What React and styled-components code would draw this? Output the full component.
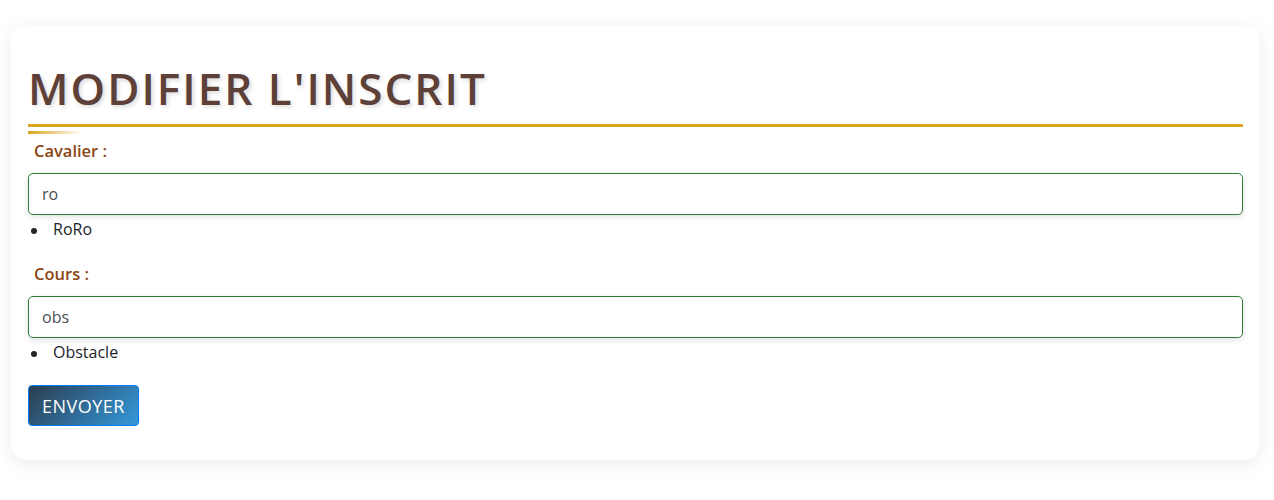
import styled, { createGlobalStyle } from "styled-components";

const GlobalStyle = createGlobalStyle`
  body {
    margin: 0;
    background: #ffffff;
    font-family: "Open Sans", "Noto Sans", sans-serif;
  }
`;

const Page = styled.div`
  padding: 25px 15px 40px 11px;
`;

const Card = styled.div`
  background: #fff;
  border-radius: 15px;
  box-shadow: 0 4px 20px rgba(0, 0, 0, 0.08);
  padding: 36px 16px 34px 17px;
`;

const Title = styled.h1`
  position: relative;
  margin: 0 0 12px;
  padding-bottom: 8px;
  font-size: 44px;
  font-weight: 600;
  line-height: 55px;
  letter-spacing: 2px;
  text-transform: uppercase;
  color: #5d4037;
  text-shadow: 2px 2px 4px rgba(0, 0, 0, 0.15);
  border-bottom: 3px solid #daa520;

  &::after {
    content: "";
    position: absolute;
    left: 0;
    bottom: -10px;
    width: 55px;
    height: 3px;
    background: linear-gradient(90deg, #daa520, transparent);
  }
`;

const Field = styled.div`
  margin-bottom: 22px;
`;

const Label = styled.label`
  display: block;
  margin: 0 0 11px 6px;
  font-size: 16.5px;
  font-weight: 600;
  color: #8b4513;
`;

const Input = styled.input`
  box-sizing: border-box;
  width: 100%;
  height: 42px;
  padding: 0 13px;
  border: 1px solid #2e7d32;
  border-radius: 5px;
  box-shadow: 0 2px 6px rgba(0, 0, 0, 0.12);
  font-family: inherit;
  font-size: 16px;
  color: #495057;
  outline: none;
`;

const Suggestions = styled.ul`
  margin: 3px 0 0;
  padding-left: 25px;
  list-style: none;
  font-size: 16px;
  line-height: 22px;
  color: #212529;

  li::before {
    content: "";
    display: inline-block;
    width: 6px;
    height: 6px;
    margin: 0 16px 0 -22px;
    border-radius: 50%;
    background: #212529;
    vertical-align: middle;
  }
`;

const Button = styled.button`
  height: 41px;
  padding: 0 13px;
  border: 1px solid #007bff;
  border-radius: 4px;
  background: linear-gradient(135deg, #2c3e50, #3498db);
  color: #fff;
  font-family: inherit;
  font-size: 18px;
  letter-spacing: 0.5px;
  text-transform: uppercase;
  cursor: pointer;
`;

export default function App() {
  return (
    <>
      <GlobalStyle />
      <Page>
        <Card>
          <Title>Modifier l'inscrit</Title>
          <form onSubmit={(e) => e.preventDefault()}>
            <Field>
              <Label>Cavalier :</Label>
              <Input defaultValue="ro" />
              <Suggestions>
                <li>RoRo</li>
              </Suggestions>
            </Field>
            <Field>
              <Label>Cours :</Label>
              <Input defaultValue="obs" />
              <Suggestions>
                <li>Obstacle</li>
              </Suggestions>
            </Field>
            <Button type="submit">Envoyer</Button>
          </form>
        </Card>
      </Page>
    </>
  );
}
